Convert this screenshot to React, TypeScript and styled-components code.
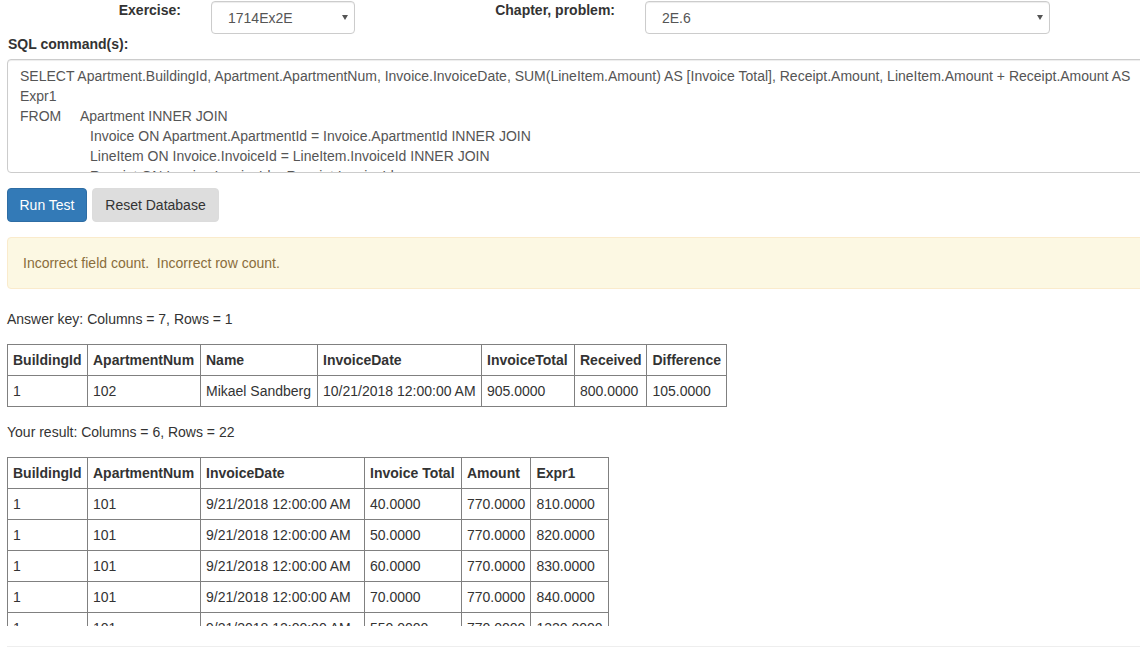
import React from "react";
import styled, { createGlobalStyle } from "styled-components";

const GlobalStyle = createGlobalStyle`
  html, body {
    margin: 0;
    padding: 0;
    overflow: hidden;
    background: #fff;
  }
  body {
    font-family: "Liberation Sans", Arial, Helvetica, sans-serif;
    font-size: 14px;
    line-height: 20px;
    color: #333;
  }
  * { box-sizing: border-box; }
`;

const Page = styled.div`
  width: 1177px;
  padding-left: 7px;
`;

const TopRow = styled.div`
  display: flex;
  align-items: flex-start;
  margin-left: -7px;
`;

const FieldLabel = styled.label<{ $w: number }>`
  width: ${(p) => p.$w}px;
  text-align: right;
  font-weight: bold;
  line-height: 20px;
  padding-right: 30px;
  flex: none;
`;

const SelectWrap = styled.div<{ $w: number }>`
  position: relative;
  width: ${(p) => p.$w}px;
  height: 33px;
  margin-top: 1px;
  flex: none;
`;

const Select = styled.select`
  appearance: none;
  -webkit-appearance: none;
  width: 100%;
  height: 100%;
  border: 1px solid #ccc;
  border-radius: 4px;
  background: #fff;
  box-shadow: inset 0 1px 1px rgba(0, 0, 0, 0.075);
  padding: 0 24px 0 16px;
  font-family: inherit;
  font-size: 14px;
  color: #555;
  outline: none;
`;

const Caret = styled.span`
  position: absolute;
  right: 7px;
  top: 14px;
  width: 0;
  height: 0;
  border-left: 3.5px solid transparent;
  border-right: 3.5px solid transparent;
  border-top: 5px solid #555;
  pointer-events: none;
`;

const SectionLabel = styled.div`
  font-weight: bold;
  line-height: 20px;
  margin-left: 1px;
  margin-bottom: 5px;
  height: 20px;
`;

const SqlArea = styled.textarea`
  display: block;
  width: 1170px;
  height: 114px;
  border: 1px solid #ccc;
  border-radius: 4px;
  box-shadow: inset 0 1px 1px rgba(0, 0, 0, 0.075);
  padding: 6px 12px;
  font-family: inherit;
  font-size: 14px;
  line-height: 20px;
  color: #555;
  resize: none;
  overflow: hidden;
  outline: none;
  margin: 0;
`;

const ButtonRow = styled.div`
  display: flex;
  gap: 5px;
  margin-top: 15px;
`;

const Button = styled.button<{ $primary?: boolean; $w: number }>`
  width: ${(p) => p.$w}px;
  height: 34px;
  padding: 6px 0;
  text-align: center;
  font-family: inherit;
  font-size: 14px;
  line-height: 20px;
  border-radius: 4px;
  border: 1px solid ${(p) => (p.$primary ? "#2e6da4" : "#dcdcdc")};
  background: ${(p) => (p.$primary ? "#337ab7" : "#dddddd")};
  color: ${(p) => (p.$primary ? "#fff" : "#333")};
  cursor: pointer;
`;

const Alert = styled.div`
  margin-top: 15px;
  margin-bottom: 20px;
  padding: 15px;
  border: 1px solid #faebcc;
  border-radius: 4px;
  background: #fcf8e3;
  color: #8a6d3b;
  line-height: 20px;
`;

const Caption = styled.p`
  margin: 0 0 15px 0;
  line-height: 20px;
`;

const Table = styled.table`
  border-collapse: collapse;
  margin-bottom: 15px;
`;

const Col = styled.col<{ $w: number }>`
  width: ${(p) => p.$w}px;
`;

const Th = styled.th`
  border: 1px solid #808080;
  padding: 5px;
  text-align: left;
  font-weight: bold;
  white-space: nowrap;
  line-height: 20px;
`;

const Td = styled.td`
  border: 1px solid #808080;
  padding: 5px;
  white-space: nowrap;
  line-height: 20px;
`;

const ScrollBox = styled.div`
  height: 169px;
  overflow: hidden;
`;

const Rule = styled.hr`
  margin: 20px 0 0 0;
  border: 0;
  border-top: 1px solid #eee;
`;

const sp = (n: number) => " ".repeat(n);

const sql =
  "SELECT Apartment.BuildingId, Apartment.ApartmentNum, Invoice.InvoiceDate, SUM(LineItem.Amount) AS [Invoice Total], Receipt.Amount, LineItem.Amount + Receipt.Amount AS Expr1\n" +
  "FROM" + sp(5) + "Apartment INNER JOIN\n" +
  sp(18) + "Invoice ON Apartment.ApartmentId = Invoice.ApartmentId INNER JOIN\n" +
  sp(18) + "LineItem ON Invoice.InvoiceId = LineItem.InvoiceId INNER JOIN\n" +
  sp(18) + "Receipt ON Invoice.InvoiceId = Receipt.InvoiceId\n" +
  "GROUP BY Apartment.BuildingId, Apartment.ApartmentNum, Invoice.InvoiceDate, Receipt.Amount, LineItem.Amount";

const keyHead = ["BuildingId", "ApartmentNum", "Name", "InvoiceDate", "InvoiceTotal", "Received", "Difference"];
const keyWidths = [80, 113, 117, 164, 93, 72, 80];
const keyRows = [["1", "102", "Mikael Sandberg", "10/21/2018 12:00:00 AM", "905.0000", "800.0000", "105.0000"]];

const resHead = ["BuildingId", "ApartmentNum", "InvoiceDate", "Invoice Total", "Amount", "Expr1"];
const resWidths = [80, 113, 164, 97, 69, 78];
const resRows = [
  ["1", "101", "9/21/2018 12:00:00 AM", "40.0000", "770.0000", "810.0000"],
  ["1", "101", "9/21/2018 12:00:00 AM", "50.0000", "770.0000", "820.0000"],
  ["1", "101", "9/21/2018 12:00:00 AM", "60.0000", "770.0000", "830.0000"],
  ["1", "101", "9/21/2018 12:00:00 AM", "70.0000", "770.0000", "840.0000"],
  ["1", "101", "9/21/2018 12:00:00 AM", "550.0000", "770.0000", "1320.0000"],
  ["1", "102", "10/21/2018 12:00:00 AM", "55.0000", "800.0000", "855.0000"],
];

function DataTable({ head, widths, rows }: { head: string[]; widths: number[]; rows: string[][] }) {
  return (
    <Table>
      <colgroup>
        {widths.map((w, i) => (
          <Col key={i} $w={w} />
        ))}
      </colgroup>
      <thead>
        <tr>
          {head.map((h) => (
            <Th key={h}>{h}</Th>
          ))}
        </tr>
      </thead>
      <tbody>
        {rows.map((r, i) => (
          <tr key={i}>
            {r.map((c, j) => (
              <Td key={j}>{c}</Td>
            ))}
          </tr>
        ))}
      </tbody>
    </Table>
  );
}

export default function App() {
  return (
    <>
      <GlobalStyle />
      <Page>
        <TopRow>
          <FieldLabel $w={211}>Exercise:</FieldLabel>
          <SelectWrap $w={144}>
            <Select defaultValue="1714Ex2E">
              <option>1714Ex2E</option>
            </Select>
            <Caret />
          </SelectWrap>
          <FieldLabel $w={290}>Chapter, problem:</FieldLabel>
          <SelectWrap $w={405}>
            <Select defaultValue="2E.6">
              <option>2E.6</option>
            </Select>
            <Caret />
          </SelectWrap>
        </TopRow>
        <SectionLabel>SQL command(s):</SectionLabel>
        <SqlArea readOnly value={sql} />
        <ButtonRow>
          <Button $primary $w={80}>Run Test</Button>
          <Button $w={127}>Reset Database</Button>
        </ButtonRow>
        <Alert>Incorrect field count.&nbsp; Incorrect row count.</Alert>
        <Caption>Answer key: Columns = 7, Rows = 1</Caption>
        <DataTable head={keyHead} widths={keyWidths} rows={keyRows} />
        <Caption>Your result: Columns = 6, Rows = 22</Caption>
        <ScrollBox>
          <DataTable head={resHead} widths={resWidths} rows={resRows} />
        </ScrollBox>
        <Rule />
      </Page>
    </>
  );
}
